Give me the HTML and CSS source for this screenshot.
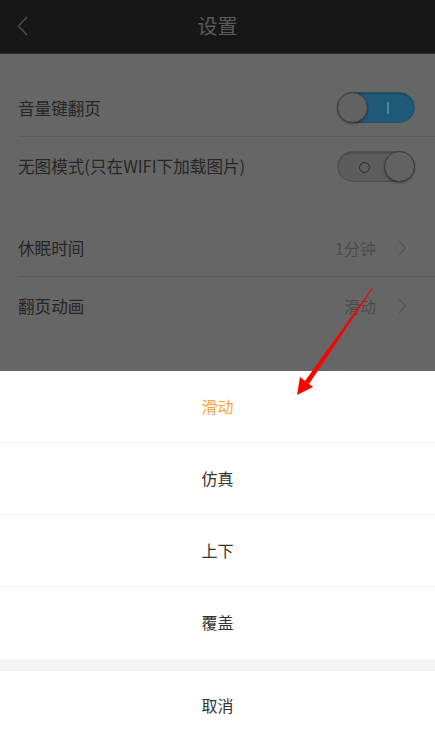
FILE: index.html
```html
<!DOCTYPE html>
<html lang="zh">
<head>
    <meta charset="UTF-8">
    <meta name="viewport" content="width=device-width, initial-scale=1.0">
    <title>设置</title>
    <link rel="stylesheet" href="styles.css">
</head>
<body>

  <header class="header">
    <span class="back">
      <svg width="12" height="20" viewBox="0 0 12 20"><path d="M10 1 L1.5 10 L10 19" fill="none" stroke="#4a4a4a" stroke-width="1.6"/></svg>
    </span>
    <span class="title">设置</span>
  </header>

  <div class="page">
    <div class="group">
      <div class="row">
        <span class="label">音量键翻页</span>
        <span class="switch on"><span class="mark"></span><span class="knob"></span></span>
      </div>
      <div class="row">
        <span class="label">无图模式(只在WIFI下加载图片)</span>
        <span class="switch off"><span class="mark"></span><span class="knob"></span></span>
      </div>
    </div>

    <div class="group">
      <div class="row">
        <span class="label">休眠时间</span>
        <span class="value">1分钟</span>
        <span class="arrow">
          <svg width="9" height="16" viewBox="0 0 9 16"><path d="M1 1 L7.5 8 L1 15" fill="none" stroke="#555" stroke-width="1.4"/></svg>
        </span>
      </div>
      <div class="row">
        <span class="label">翻页动画</span>
        <span class="value">滑动</span>
        <span class="arrow">
          <svg width="9" height="16" viewBox="0 0 9 16"><path d="M1 1 L7.5 8 L1 15" fill="none" stroke="#555" stroke-width="1.4"/></svg>
        </span>
      </div>
    </div>
  </div>

  <div class="sheet">
    <div class="option active">滑动</div>
    <div class="option">仿真</div>
    <div class="option">上下</div>
    <div class="option">覆盖</div>
    <div class="sheet-gap"></div>
    <div class="option cancel">取消</div>
  </div>

  <!-- red arrow pointing at the selected option -->
  <svg class="pointer" width="435" height="742" viewBox="0 0 435 742">
    <polygon points="373,288 372.3,287.6 305,381 309,384" fill="#ff0000"/>
    <polygon points="297,395 300,377 313,387" fill="#ff0000"/>
  </svg>

</body>
</html>
```

FILE: styles.css
```css
* {
  box-sizing: border-box;
}

body {
  margin: 0;
  width: 435px;
  height: 742px;
  overflow: hidden;
  background: #666666;
  font-family: "Noto Sans CJK SC", "Noto Sans", sans-serif;
  display: flex;
  flex-direction: column;
  position: relative;
}

.header {
  height: 54px;
  background: #171717;
  border-bottom: 1px solid #2c2c2c;
  display: flex;
  align-items: center;
  justify-content: center;
  position: relative;
  flex-shrink: 0;
}

.back {
  position: absolute;
  left: 17px;
  top: 16px;
}

.title {
  color: #5a5a5a;
  font-size: 20px;
  margin-top: -2px;
}

.page {
  flex: 1;
  padding-top: 25px;
}

.group {
  margin-bottom: 24px;
  padding-left: 18px;
}

.row {
  height: 58px;
  display: flex;
  align-items: center;
  padding-right: 20px;
  border-bottom: 1px solid #5c5c5c;
}

.group .row:last-child {
  border-bottom: none;
}

.label {
  flex: 1;
  font-size: 16.6px;
  color: #262626;
}

.value {
  font-size: 16px;
  color: #4c4c4c;
  margin-right: 22px;
}

.arrow {
  display: flex;
  margin-right: 8px;
}

/* switches */
.switch {
  width: 78px;
  height: 31px;
  border-radius: 16px;
  position: relative;
  border: 1px solid #4e4e4e;
  box-shadow: inset 0 1px 2px rgba(0, 0, 0, 0.25);
}

.switch.on {
  background: #1f5b78;
  border-color: #2a5064;
}

.switch.off {
  background: #5c5c5c;
}

.knob {
  position: absolute;
  top: -1px;
  width: 31px;
  height: 31px;
  border-radius: 50%;
  background: #626262;
  border: 1px solid #3c3c3c;
  box-shadow: 0 1px 2px rgba(0, 0, 0, 0.35);
}

.switch.on .knob {
  left: -1px;
}

.switch.off .knob {
  right: -1px;
}

.switch.on .mark {
  position: absolute;
  left: 49px;
  top: 9px;
  width: 2px;
  height: 12px;
  background: #5a7f92;
}

.switch.off .mark {
  position: absolute;
  left: 21px;
  top: 10px;
  width: 11px;
  height: 11px;
  border-radius: 50%;
  border: 1.5px solid #2e2e2e;
}

/* bottom sheet */
.sheet {
  background: #ffffff;
  flex-shrink: 0;
}

.option {
  height: 72px;
  display: flex;
  align-items: center;
  justify-content: center;
  padding-bottom: 2px;
  font-size: 16px;
  color: #333333;
  border-bottom: 1px solid #f2f2f2;
}

.option:nth-child(4) {
  border-bottom: none;
}

.option.active {
  color: #f7a33a;
}

.option.cancel {
  height: 71px;
  padding-bottom: 3px;
  border-bottom: none;
}

.sheet-gap {
  height: 12px;
  background: #f4f4f4;
}

.pointer {
  position: absolute;
  left: 0;
  top: 0;
  pointer-events: none;
}
```
